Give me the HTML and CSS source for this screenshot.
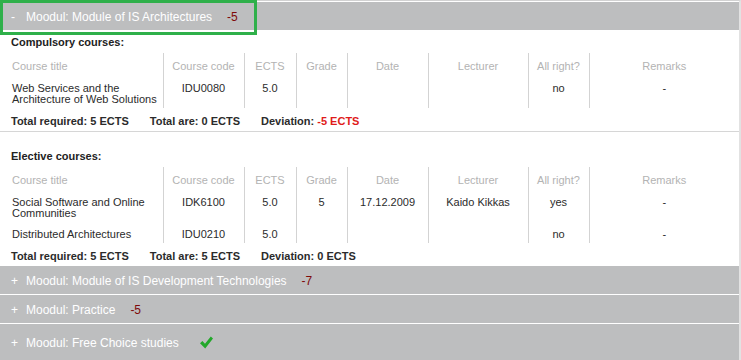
FILE: index.html
```html
<!DOCTYPE html>
<html lang="en">
<head>
    <meta charset="UTF-8">
    <meta name="viewport" content="width=device-width, initial-scale=1.0">
    <title>Study Plan</title>
    <link rel="stylesheet" href="styles.css">
</head>
<body>

    <div class="page">
        <div class="focus-ring"></div>

        <div class="module">
            <div class="module-head"><span class="toggle">-</span>Moodul: Module of IS Architectures<span class="deficit">-5</span></div>
            <div class="module-body">
                <div class="group">
                    <h4>Compulsory courses:</h4>
                    <table class="courses">
                        <colgroup>
                            <col class="c-title"><col class="c-code"><col class="c-ects"><col class="c-grade">
                            <col class="c-date"><col class="c-lect"><col class="c-ok"><col class="c-rem">
                        </colgroup>
                        <tr>
                            <th>Course title</th><th>Course code</th><th>ECTS</th><th>Grade</th>
                            <th>Date</th><th>Lecturer</th><th>All right?</th><th>Remarks</th>
                        </tr>
                        <tr>
                            <td>Web Services and the Architecture of Web Solutions</td>
                            <td>IDU0080</td><td>5.0</td><td></td><td></td><td></td><td>no</td><td>-</td>
                        </tr>
                    </table>
                    <p class="totals"><span>Total required: 5 ECTS</span><span>Total are: 0 ECTS</span><span>Deviation: <em class="neg">-5 ECTS</em></span></p>
                </div>

                <div class="group">
                    <h4>Elective courses:</h4>
                    <table class="courses">
                        <colgroup>
                            <col class="c-title"><col class="c-code"><col class="c-ects"><col class="c-grade">
                            <col class="c-date"><col class="c-lect"><col class="c-ok"><col class="c-rem">
                        </colgroup>
                        <tr>
                            <th>Course title</th><th>Course code</th><th>ECTS</th><th>Grade</th>
                            <th>Date</th><th>Lecturer</th><th>All right?</th><th>Remarks</th>
                        </tr>
                        <tr>
                            <td>Social Software and Online Communities</td>
                            <td>IDK6100</td><td>5.0</td><td>5</td><td>17.12.2009</td><td>Kaido Kikkas</td><td>yes</td><td>-</td>
                        </tr>
                        <tr>
                            <td>Distributed Architectures</td>
                            <td>IDU0210</td><td>5.0</td><td></td><td></td><td></td><td>no</td><td>-</td>
                        </tr>
                    </table>
                    <p class="totals"><span>Total required: 5 ECTS</span><span>Total are: 5 ECTS</span><span>Deviation: 0 ECTS</span></p>
                </div>
            </div>
        </div>

        <div class="module">
            <div class="module-head"><span class="toggle">+</span>Moodul: Module of IS Development Technologies<span class="deficit">-7</span></div>
        </div>

        <div class="module">
            <div class="module-head"><span class="toggle">+</span>Moodul: Practice<span class="deficit">-5</span></div>
        </div>

        <div class="module">
            <div class="module-head module-done"><span class="toggle">+</span>Moodul: Free Choice studies<svg class="check" width="13" height="13" viewBox="0 0 13 13"><polygon points="0,7.2 2.4,5 5,7.8 10.8,0.6 13,2.6 5.2,12.6" fill="#22a82a"/></svg></div>
        </div>
    </div>

</body>
</html>
```

FILE: styles.css
```css
body {
    margin: 0;
    font-family: "Liberation Sans", Arial, sans-serif;
    font-size: 11px;
    color: #2b2b2b;
    background: #fff;
}
.page {
    position: relative;
    width: 739px;
    min-height: 359px;
    border-top: 1px solid #d2d2d2;
    border-right: 2px solid #e2e2e2;
    padding-top: 1px;
}
.focus-ring {
    position: absolute;
    left: 0;
    top: -1px;
    width: 257px;
    height: 35px;
    box-sizing: border-box;
    border: 3px solid #2fb04a;
}
.module + .module {
    margin-top: 1px;
}
.module-head {
    background: #bdbebf;
    color: #fff;
    font-size: 12px;
    line-height: 14px;
    padding: 8px 11px 6px;
}
.module-done {
    padding-top: 12px;
    padding-bottom: 10px;
}
.toggle {
    display: inline-block;
    width: 15px;
}
.deficit {
    color: #7f0a0a;
    margin-left: 15px;
}
.check {
    margin-left: 21px;
    vertical-align: -2px;
}
.group {
    padding: 6px 0 3px 11px;
    border-bottom: 1px solid #d6d6d6;
}
.group + .group {
    padding-top: 18px;
    padding-bottom: 2px;
    border-bottom: none;
}
.group h4 {
    margin: 0 0 4px;
    font-size: 11px;
    line-height: 13px;
    color: #222;
}
.courses {
    border-collapse: collapse;
    table-layout: fixed;
    width: 728px;
}
.c-title { width: 152px; }
.c-code { width: 81px; }
.c-ects { width: 52px; }
.c-grade { width: 51px; }
.c-date { width: 81px; }
.c-lect { width: 100px; }
.c-ok { width: 61px; }
.c-rem { width: 150px; }
.courses th, .courses td {
    padding: 7px 2px 3px;
    line-height: 11px;
    font-weight: normal;
    text-align: center;
    vertical-align: top;
}
.courses th {
    color: #b3b3b3;
    padding: 8px 2px 4px;
}
.courses th:first-child, .courses td:first-child {
    text-align: left;
    padding-left: 1px;
}
.courses th + th, .courses td + td {
    border-left: 1px solid #d3d3d3;
}
.totals {
    margin: 7px 0 0;
    font-weight: bold;
    line-height: 13px;
    color: #2b2b2b;
}
.totals span {
    margin-right: 21px;
}
.neg {
    color: #e01b1b;
    font-style: normal;
}
```
